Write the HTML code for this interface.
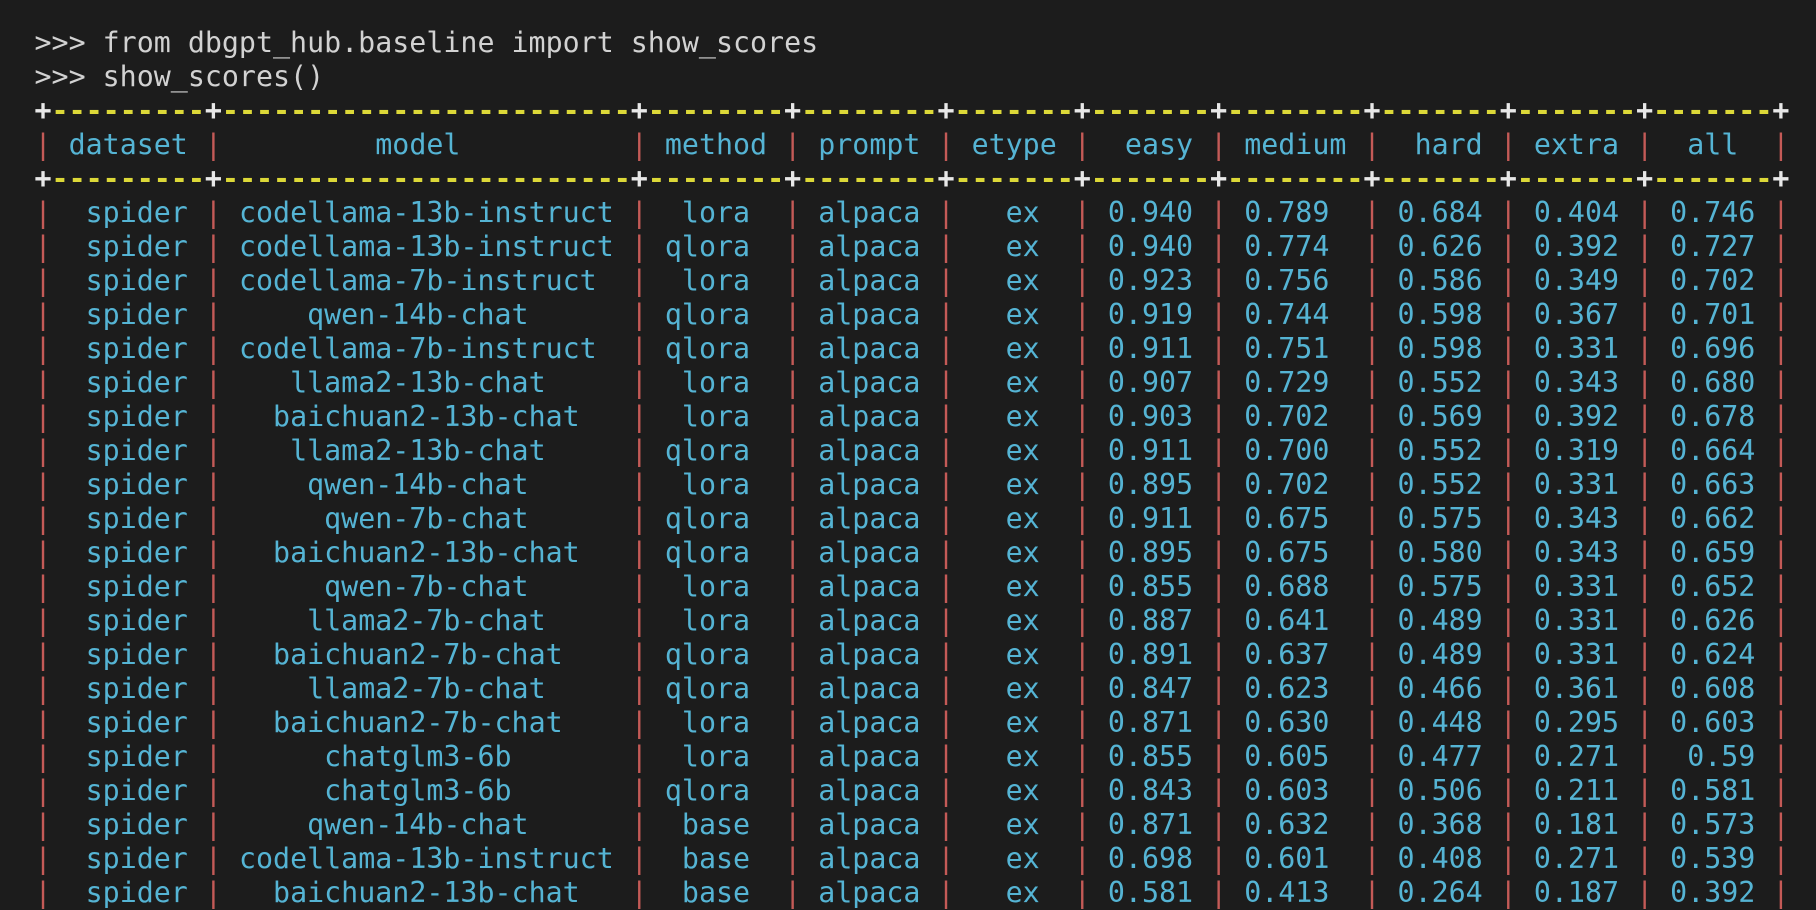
<!DOCTYPE html>
<html><head><meta charset="utf-8"><style>
html,body{margin:0;padding:0;background:#1c1c1c;width:1816px;height:886px;overflow:hidden}
pre{margin:0;position:absolute;left:34.5px;top:26px;font-family:"DejaVu Sans Mono","Liberation Mono",monospace;font-size:28.3px;line-height:34px;color:#55b4d4;white-space:pre}
.w{color:#d2d2d2}
.p{color:#e8e8e8;font-weight:bold}
.y{color:#dcd838;font-weight:bold}
.r{color:#c45a57}
</style></head><body>
<pre><span class="w">&gt;&gt;&gt; from dbgpt_hub.baseline import show_scores
&gt;&gt;&gt; show_scores()</span>
<span class="p">+</span><span class="y">---------</span><span class="p">+</span><span class="y">------------------------</span><span class="p">+</span><span class="y">--------</span><span class="p">+</span><span class="y">--------</span><span class="p">+</span><span class="y">-------</span><span class="p">+</span><span class="y">-------</span><span class="p">+</span><span class="y">--------</span><span class="p">+</span><span class="y">-------</span><span class="p">+</span><span class="y">-------</span><span class="p">+</span><span class="y">-------</span><span class="p">+</span>
<span class="r">|</span> dataset <span class="r">|</span>         model          <span class="r">|</span> method <span class="r">|</span> prompt <span class="r">|</span> etype <span class="r">|</span>  easy <span class="r">|</span> medium <span class="r">|</span>  hard <span class="r">|</span> extra <span class="r">|</span>  all  <span class="r">|</span>
<span class="p">+</span><span class="y">---------</span><span class="p">+</span><span class="y">------------------------</span><span class="p">+</span><span class="y">--------</span><span class="p">+</span><span class="y">--------</span><span class="p">+</span><span class="y">-------</span><span class="p">+</span><span class="y">-------</span><span class="p">+</span><span class="y">--------</span><span class="p">+</span><span class="y">-------</span><span class="p">+</span><span class="y">-------</span><span class="p">+</span><span class="y">-------</span><span class="p">+</span>
<span class="r">|</span>  spider <span class="r">|</span> codellama-13b-instruct <span class="r">|</span>  lora  <span class="r">|</span> alpaca <span class="r">|</span>   ex  <span class="r">|</span> 0.940 <span class="r">|</span> 0.789  <span class="r">|</span> 0.684 <span class="r">|</span> 0.404 <span class="r">|</span> 0.746 <span class="r">|</span>
<span class="r">|</span>  spider <span class="r">|</span> codellama-13b-instruct <span class="r">|</span> qlora  <span class="r">|</span> alpaca <span class="r">|</span>   ex  <span class="r">|</span> 0.940 <span class="r">|</span> 0.774  <span class="r">|</span> 0.626 <span class="r">|</span> 0.392 <span class="r">|</span> 0.727 <span class="r">|</span>
<span class="r">|</span>  spider <span class="r">|</span> codellama-7b-instruct  <span class="r">|</span>  lora  <span class="r">|</span> alpaca <span class="r">|</span>   ex  <span class="r">|</span> 0.923 <span class="r">|</span> 0.756  <span class="r">|</span> 0.586 <span class="r">|</span> 0.349 <span class="r">|</span> 0.702 <span class="r">|</span>
<span class="r">|</span>  spider <span class="r">|</span>     qwen-14b-chat      <span class="r">|</span> qlora  <span class="r">|</span> alpaca <span class="r">|</span>   ex  <span class="r">|</span> 0.919 <span class="r">|</span> 0.744  <span class="r">|</span> 0.598 <span class="r">|</span> 0.367 <span class="r">|</span> 0.701 <span class="r">|</span>
<span class="r">|</span>  spider <span class="r">|</span> codellama-7b-instruct  <span class="r">|</span> qlora  <span class="r">|</span> alpaca <span class="r">|</span>   ex  <span class="r">|</span> 0.911 <span class="r">|</span> 0.751  <span class="r">|</span> 0.598 <span class="r">|</span> 0.331 <span class="r">|</span> 0.696 <span class="r">|</span>
<span class="r">|</span>  spider <span class="r">|</span>    llama2-13b-chat     <span class="r">|</span>  lora  <span class="r">|</span> alpaca <span class="r">|</span>   ex  <span class="r">|</span> 0.907 <span class="r">|</span> 0.729  <span class="r">|</span> 0.552 <span class="r">|</span> 0.343 <span class="r">|</span> 0.680 <span class="r">|</span>
<span class="r">|</span>  spider <span class="r">|</span>   baichuan2-13b-chat   <span class="r">|</span>  lora  <span class="r">|</span> alpaca <span class="r">|</span>   ex  <span class="r">|</span> 0.903 <span class="r">|</span> 0.702  <span class="r">|</span> 0.569 <span class="r">|</span> 0.392 <span class="r">|</span> 0.678 <span class="r">|</span>
<span class="r">|</span>  spider <span class="r">|</span>    llama2-13b-chat     <span class="r">|</span> qlora  <span class="r">|</span> alpaca <span class="r">|</span>   ex  <span class="r">|</span> 0.911 <span class="r">|</span> 0.700  <span class="r">|</span> 0.552 <span class="r">|</span> 0.319 <span class="r">|</span> 0.664 <span class="r">|</span>
<span class="r">|</span>  spider <span class="r">|</span>     qwen-14b-chat      <span class="r">|</span>  lora  <span class="r">|</span> alpaca <span class="r">|</span>   ex  <span class="r">|</span> 0.895 <span class="r">|</span> 0.702  <span class="r">|</span> 0.552 <span class="r">|</span> 0.331 <span class="r">|</span> 0.663 <span class="r">|</span>
<span class="r">|</span>  spider <span class="r">|</span>      qwen-7b-chat      <span class="r">|</span> qlora  <span class="r">|</span> alpaca <span class="r">|</span>   ex  <span class="r">|</span> 0.911 <span class="r">|</span> 0.675  <span class="r">|</span> 0.575 <span class="r">|</span> 0.343 <span class="r">|</span> 0.662 <span class="r">|</span>
<span class="r">|</span>  spider <span class="r">|</span>   baichuan2-13b-chat   <span class="r">|</span> qlora  <span class="r">|</span> alpaca <span class="r">|</span>   ex  <span class="r">|</span> 0.895 <span class="r">|</span> 0.675  <span class="r">|</span> 0.580 <span class="r">|</span> 0.343 <span class="r">|</span> 0.659 <span class="r">|</span>
<span class="r">|</span>  spider <span class="r">|</span>      qwen-7b-chat      <span class="r">|</span>  lora  <span class="r">|</span> alpaca <span class="r">|</span>   ex  <span class="r">|</span> 0.855 <span class="r">|</span> 0.688  <span class="r">|</span> 0.575 <span class="r">|</span> 0.331 <span class="r">|</span> 0.652 <span class="r">|</span>
<span class="r">|</span>  spider <span class="r">|</span>     llama2-7b-chat     <span class="r">|</span>  lora  <span class="r">|</span> alpaca <span class="r">|</span>   ex  <span class="r">|</span> 0.887 <span class="r">|</span> 0.641  <span class="r">|</span> 0.489 <span class="r">|</span> 0.331 <span class="r">|</span> 0.626 <span class="r">|</span>
<span class="r">|</span>  spider <span class="r">|</span>   baichuan2-7b-chat    <span class="r">|</span> qlora  <span class="r">|</span> alpaca <span class="r">|</span>   ex  <span class="r">|</span> 0.891 <span class="r">|</span> 0.637  <span class="r">|</span> 0.489 <span class="r">|</span> 0.331 <span class="r">|</span> 0.624 <span class="r">|</span>
<span class="r">|</span>  spider <span class="r">|</span>     llama2-7b-chat     <span class="r">|</span> qlora  <span class="r">|</span> alpaca <span class="r">|</span>   ex  <span class="r">|</span> 0.847 <span class="r">|</span> 0.623  <span class="r">|</span> 0.466 <span class="r">|</span> 0.361 <span class="r">|</span> 0.608 <span class="r">|</span>
<span class="r">|</span>  spider <span class="r">|</span>   baichuan2-7b-chat    <span class="r">|</span>  lora  <span class="r">|</span> alpaca <span class="r">|</span>   ex  <span class="r">|</span> 0.871 <span class="r">|</span> 0.630  <span class="r">|</span> 0.448 <span class="r">|</span> 0.295 <span class="r">|</span> 0.603 <span class="r">|</span>
<span class="r">|</span>  spider <span class="r">|</span>      chatglm3-6b       <span class="r">|</span>  lora  <span class="r">|</span> alpaca <span class="r">|</span>   ex  <span class="r">|</span> 0.855 <span class="r">|</span> 0.605  <span class="r">|</span> 0.477 <span class="r">|</span> 0.271 <span class="r">|</span>  0.59 <span class="r">|</span>
<span class="r">|</span>  spider <span class="r">|</span>      chatglm3-6b       <span class="r">|</span> qlora  <span class="r">|</span> alpaca <span class="r">|</span>   ex  <span class="r">|</span> 0.843 <span class="r">|</span> 0.603  <span class="r">|</span> 0.506 <span class="r">|</span> 0.211 <span class="r">|</span> 0.581 <span class="r">|</span>
<span class="r">|</span>  spider <span class="r">|</span>     qwen-14b-chat      <span class="r">|</span>  base  <span class="r">|</span> alpaca <span class="r">|</span>   ex  <span class="r">|</span> 0.871 <span class="r">|</span> 0.632  <span class="r">|</span> 0.368 <span class="r">|</span> 0.181 <span class="r">|</span> 0.573 <span class="r">|</span>
<span class="r">|</span>  spider <span class="r">|</span> codellama-13b-instruct <span class="r">|</span>  base  <span class="r">|</span> alpaca <span class="r">|</span>   ex  <span class="r">|</span> 0.698 <span class="r">|</span> 0.601  <span class="r">|</span> 0.408 <span class="r">|</span> 0.271 <span class="r">|</span> 0.539 <span class="r">|</span>
<span class="r">|</span>  spider <span class="r">|</span>   baichuan2-13b-chat   <span class="r">|</span>  base  <span class="r">|</span> alpaca <span class="r">|</span>   ex  <span class="r">|</span> 0.581 <span class="r">|</span> 0.413  <span class="r">|</span> 0.264 <span class="r">|</span> 0.187 <span class="r">|</span> 0.392 <span class="r">|</span></pre>
</body></html>
